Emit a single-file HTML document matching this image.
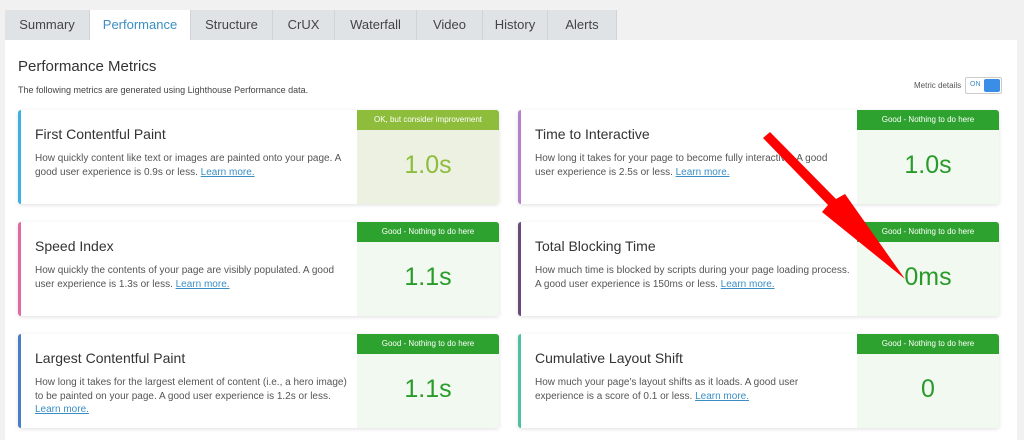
<!DOCTYPE html>
<html><head><meta charset="utf-8"><style>
*{box-sizing:border-box;margin:0;padding:0}
body{width:1024px;height:440px;background:#f1f1f1;font-family:"Liberation Sans",sans-serif;position:relative;overflow:hidden}
.tab{position:absolute;top:10px;height:30px;background:#dfe3e6;border-right:1px solid #cfd4d8;font-size:13px;color:#444;text-align:center;line-height:30px}
.tab.act{background:#fff;color:#3a8ec4}
.panel{position:absolute;left:5px;top:40px;width:1012px;height:400px;background:#fff}
h1{position:absolute;left:18px;top:58px;font-size:15px;font-weight:normal;color:#333}
.sub{position:absolute;left:18px;top:85px;font-size:9px;color:#444}
.md{position:absolute;left:914px;top:81px;font-size:8px;color:#555}
.tog{position:absolute;left:965px;top:77px;width:37px;height:17px;border:1px solid #ccc;border-radius:2px;background:#fff}
.tog span{position:absolute;left:4px;top:3px;font-size:7px;color:#3a8ec4}
.tog i{position:absolute;right:1px;top:1px;width:16px;height:13px;background:#3a8ee6;border-radius:2px}
.card{position:absolute;width:481px;height:94px;background:#fff;border-radius:3px;box-shadow:0 1px 4px rgba(0,0,0,.13);border-left:3px solid}
.card h2{position:absolute;left:14px;top:16px;font-size:14px;font-weight:normal;color:#333}
.card p{position:absolute;left:14px;top:42px;width:315px;font-size:10px;line-height:13.5px;color:#555}
.card a{color:#3a8ec4;text-decoration:underline}
.badge{position:absolute;right:0;top:0;width:142px;height:94px;background:#f1f9f1;border-radius:0 3px 3px 0}
.badge b{display:block;height:20px;background:#2ea22e;color:#fff;font-size:8px;font-weight:normal;text-align:center;line-height:20px;border-radius:0 3px 0 0}
.badge div{text-align:center;font-size:25px;color:#2a9a2a;margin-top:21px}
.ok{background:#ecf1e2}.ok b{background:#8dbd3b}.ok div{color:#8dbd3b}
</style></head><body>
<div class="tab" style="left:5px;width:85px">Summary</div>
<div class="tab act" style="left:90px;width:101px">Performance</div>
<div class="tab" style="left:191px;width:82px">Structure</div>
<div class="tab" style="left:273px;width:62px">CrUX</div>
<div class="tab" style="left:335px;width:82px">Waterfall</div>
<div class="tab" style="left:417px;width:66px">Video</div>
<div class="tab" style="left:483px;width:65px">History</div>
<div class="tab" style="left:548px;width:69px">Alerts</div>
<div class="panel"></div>
<h1>Performance Metrics</h1>
<div class="sub">The following metrics are generated using Lighthouse Performance data.</div>
<div class="md">Metric details</div>
<div class="tog"><span>ON</span><i></i></div>

<div class="card" style="left:18px;top:110px;border-color:#3cb0e0"><h2>First Contentful Paint</h2><p>How quickly content like text or images are painted onto your page. A good user experience is 0.9s or less. <a>Learn more.</a></p><div class="badge ok"><b>OK, but consider improvement</b><div>1.0s</div></div></div>
<div class="card" style="left:518px;top:110px;border-color:#b57fcc"><h2>Time to Interactive</h2><p style="width:300px">How long it takes for your page to become fully interactive. A good user experience is 2.5s or less. <a>Learn more.</a></p><div class="badge"><b>Good - Nothing to do here</b><div>1.0s</div></div></div>
<div class="card" style="left:18px;top:222px;border-color:#e06aa0"><h2>Speed Index</h2><p>How quickly the contents of your page are visibly populated. A good user experience is 1.3s or less. <a>Learn more.</a></p><div class="badge"><b>Good - Nothing to do here</b><div>1.1s</div></div></div>
<div class="card" style="left:518px;top:222px;border-color:#6a4a7a"><h2>Total Blocking Time</h2><p style="width:318px">How much time is blocked by scripts during your page loading process. A good user experience is 150ms or less. <a>Learn more.</a></p><div class="badge"><b>Good - Nothing to do here</b><div>0ms</div></div></div>
<div class="card" style="left:18px;top:334px;border-color:#4a7cc8"><h2>Largest Contentful Paint</h2><p style="width:318px">How long it takes for the largest element of content (i.e., a hero image) to be painted on your page. A good user experience is 1.2s or less. <a>Learn more.</a></p><div class="badge"><b>Good - Nothing to do here</b><div>1.1s</div></div></div>
<div class="card" style="left:518px;top:334px;border-color:#4cc0a0"><h2>Cumulative Layout Shift</h2><p style="width:298px">How much your page's layout shifts as it loads. A good user experience is a score of 0.1 or less. <a>Learn more.</a></p><div class="badge"><b>Good - Nothing to do here</b><div>0</div></div></div>

<svg style="position:absolute;left:0;top:0" width="1024" height="440"><polygon points="763,138 770,132 836,199 845,194 905,279 822,212 828,205" fill="#f00"/></svg>
</body></html>
